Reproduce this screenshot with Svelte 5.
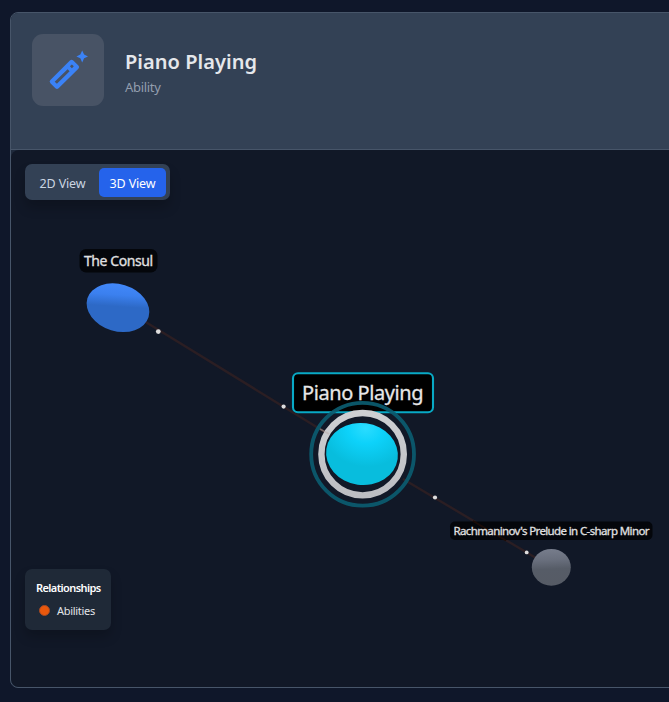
<script>
  let view = $state('3D');
  const views = ['2D', '3D'];
</script>

<main class="page">
  <article class="card">
    <header>
      <div class="icon">
        <svg width="40" height="40" viewBox="0 0 40 40" aria-hidden="true">
          <path fill="#3b82f6" d="M34.2 0.6 L36.1 4.5 L40 6.4 L36.1 8.3 L34.2 12.4 L32.3 8.3 L28.4 6.4 L32.3 4.5Z" />
          <path fill="#3b82f6" fill-rule="evenodd" d="M21.9 10.6 Q23.6 9 25.3 10.6 L30.4 15.6 Q32 17.2 30.4 18.8 L10.6 38.2 Q9 39.8 7.4 38.2 L2.4 33.3 Q0.8 31.7 2.4 30.1Z M19.6 19.3 L6.7 31.7 L8.9 33.8 L21.6 21.2Z M23.9 14.4 L21.9 16.3 L23.9 18.2 L25.8 16.3Z" />
        </svg>
      </div>
      <div class="title">
        <h1>Piano Playing</h1>
        <p>Ability</p>
      </div>
    </header>
    <section class="graph">
      <div class="toggle">
        {#each views as v}
          <button class:active={view === v} onclick={() => (view = v)}><span>{v} View</span></button>
        {/each}
      </div>
      <svg class="scene" width="658" height="537" viewBox="11 150 658 537">
        <defs>
          <linearGradient id="blue" x1="0.4" y1="0" x2="0.5" y2="1" gradientTransform="rotate(-12 .5 .5)">
            <stop offset="0" stop-color="#4288fa" />
            <stop offset="0.24" stop-color="#3b80ef" />
            <stop offset="0.48" stop-color="#2d69c6" />
            <stop offset="1" stop-color="#2d69c6" />
          </linearGradient>
          <radialGradient id="cyan" cx="0.5" cy="0.08" r="0.62">
            <stop offset="0" stop-color="#2bdcff" />
            <stop offset="0.4" stop-color="#0dd2fa" />
            <stop offset="1" stop-color="#08bddd" />
          </radialGradient>
          <linearGradient id="grey" x1="0.45" y1="0" x2="0.5" y2="1">
            <stop offset="0" stop-color="#777d8c" />
            <stop offset="0.3" stop-color="#696f7d" />
            <stop offset="0.55" stop-color="#565c67" />
            <stop offset="1" stop-color="#565b65" />
          </linearGradient>
          <linearGradient id="ring" x1="0" y1="0" x2="0" y2="1">
            <stop offset="0" stop-color="#cecfd2" />
            <stop offset="1" stop-color="#bdbec3" />
          </linearGradient>
        </defs>
        <path d="M144 321 L328 434 M403 479 L536 558" stroke="#2b1e23" stroke-width="2.4" fill="none" />
        <rect x="79.5" y="249" width="78" height="23.5" rx="6.5" fill="#04060b" />
        <text x="84" y="266" font-size="14" textLength="69">The Consul</text>
        <ellipse cx="118" cy="307.7" rx="32" ry="23.5" transform="rotate(17 118 307.7)" fill="url(#blue)" />
        <rect x="293" y="373.3" width="140" height="39" rx="5" fill="#000" stroke="#08a9c5" stroke-width="2.1" />
        <text class="focus" x="302" y="400" font-size="20" textLength="121.5">Piano Playing</text>
        <ellipse cx="362" cy="454" rx="36" ry="31" transform="rotate(8 362 454)" fill="url(#cyan)" />
        <circle cx="362.6" cy="454.2" r="41.2" fill="none" stroke="url(#ring)" stroke-width="6.4" />
        <circle cx="362.6" cy="454.3" r="51.4" fill="none" stroke="#0b5c70" stroke-opacity=".92" stroke-width="3.8" />
        <path d="M320 429 L329 434" stroke="#bba9a7" stroke-width="1.6" stroke-opacity=".5" />
        <rect x="450" y="521.5" width="202.5" height="18.5" rx="5" fill="#04060b" />
        <path d="M473 521 L506 540.5" stroke="#1a0b07" stroke-width="2" />
        <text x="453.5" y="535" font-size="11.5" textLength="196">Rachmaninov's Prelude in C-sharp Minor</text>
        <ellipse cx="551.3" cy="567.3" rx="19.5" ry="18.4" fill="url(#grey)" />
        <g fill="#dedddd">
          <circle cx="158.3" cy="331.6" r="2.4" />
          <circle cx="283.6" cy="406.6" r="2.1" />
          <circle cx="435" cy="497.5" r="2.1" />
          <circle cx="526.7" cy="552.4" r="1.9" />
        </g>
      </svg>
      <aside>
        <h2>Relationships</h2>
        <div class="item"><i></i><span>Abilities</span></div>
      </aside>
    </section>
  </article>
</main>

<style>
  :global(body) { background: #0f172a; }
  * { box-sizing: border-box; margin: 0; }
  .page {
    width: 669px;
    height: 702px;
    padding: 12px 0 14px 10px;
    overflow: hidden;
    background: #0f172a;
    font-family: "Noto Sans", "Open Sans", sans-serif;
  }
  .card {
    width: 671px;
    height: 676px;
    display: flex;
    flex-direction: column;
    border: 1px solid #475569;
    border-radius: 8px;
    overflow: hidden;
    background: #1e293b;
  }
  header {
    height: 137px;
    flex: none;
    display: flex;
    align-items: flex-start;
    gap: 21px;
    padding: 21px;
    background: #334155;
    border-bottom: 1px solid #475569;
  }
  .icon {
    width: 72px;
    height: 72px;
    display: grid;
    place-items: center;
    border-radius: 11px;
    background: #485365;
  }
  .icon svg { overflow: visible; }
  .title { padding-top: 14px; }
  h1 {
    font-size: 20px;
    line-height: 28px;
    font-weight: 600;
    color: #e5e7eb;
    letter-spacing: 0.05px;
    white-space: nowrap;
  }
  .title p {
    margin-top: 1px;
    font-size: 13px;
    line-height: 20px;
    letter-spacing: -0.3px;
    color: #949eae;
  }
  .graph {
    position: relative;
    flex: 1;
    display: flex;
    flex-direction: column;
    align-items: flex-start;
    justify-content: space-between;
    padding: 14px 14px 57px;
    border-radius: 8px;
    background: #111827;
  }
  .toggle {
    position: relative;
    z-index: 1;
    width: 145px;
    height: 36px;
    display: flex;
    gap: 3px;
    padding: 4px;
    border-radius: 7px;
    background: #334155;
    box-shadow: 0 8px 12px #0003;
  }
  button {
    width: 67px;
    height: 29px;
    padding: 2px 0 0;
    border: 0;
    border-radius: 5px;
    background: none;
    color: #cbd5e1;
    font: 12.5px/27px "Noto Sans", sans-serif;
    letter-spacing: -0.12px;
    white-space: nowrap;
  }
  button.active { background: #2563eb; color: #fff; }
  .scene { position: absolute; left: 0; top: 0; }
  .scene text {
    font-family: "Noto Sans", sans-serif;
    fill: #e0e0e1;
    stroke: #e0e0e1;
    stroke-width: 0.3px;
  }
  .scene .focus { fill: #e9e9e9; }
  aside {
    position: relative;
    width: 86px;
    height: 61px;
    padding: 11px;
    border-radius: 7px;
    background: #1f2937;
    box-shadow: 0 7px 12px #0003;
    color: #fff;
  }
  h2 {
    font-size: 11px;
    line-height: 16px;
    font-weight: 600;
    letter-spacing: -0.6px;
    white-space: nowrap;
  }
  .item {
    display: flex;
    align-items: center;
    gap: 7px;
    margin-top: 7px;
    padding-left: 3px;
    font-size: 11px;
    line-height: 16px;
    letter-spacing: -0.3px;
    color: #e2e5e9;
  }
  .item i {
    width: 11px;
    height: 11px;
    margin-top: -1px;
    border: 1px solid #a44a25;
    border-radius: 50%;
    background: #ea580c;
  }
</style>
